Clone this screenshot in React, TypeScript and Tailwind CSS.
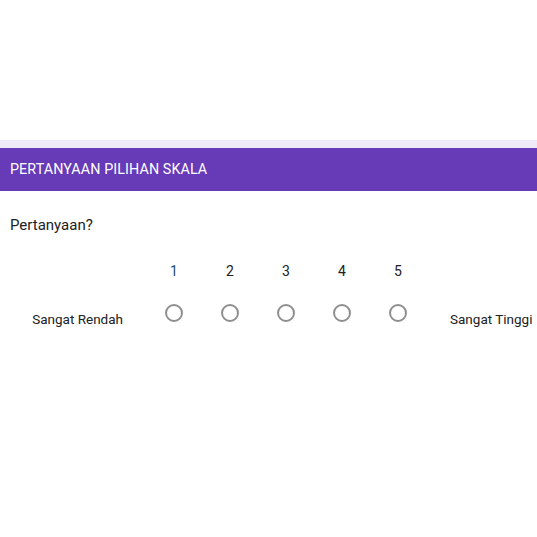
import React from 'react';

const scale = [1, 2, 3, 4, 5];

const App: React.FC = () => {
  return (
    <div className="w-[537px] h-[537px] bg-white overflow-hidden font-['Roboto',sans-serif]">
      <div className="h-[140px]" />
      <div className="h-[8px] bg-[#efe9f8]" />
      <div className="h-[43px] bg-[#673ab7] flex items-center px-[10px]">
        <span className="text-white text-[14.3px] tracking-[0.1px]">PERTANYAAN PILIHAN SKALA</span>
      </div>
      <div className="pt-[24px] px-[10px]">
        <p className="text-[15px] text-[#202124] leading-[20px]">Pertanyaan?</p>
      </div>
      <div className="flex mt-[26px]">
        <div className="w-[146px] flex justify-end items-start pr-[23px] pt-[48px]">
          <span className="text-[13.5px] leading-[20px] text-[#202124]">Sangat Rendah</span>
        </div>
        {scale.map((n) => (
          <div key={n} className="w-[56px] flex flex-col items-center">
            <span className={`text-[14px] leading-[20px] ${n === 1 ? 'text-[#1a4e7a]' : 'text-[#202124]'}`}>{n}</span>
            <div className="mt-[23px] w-[18px] h-[18px] rounded-full border-2 border-[#8f8f8f]" />
          </div>
        ))}
        <div className="flex items-start pl-[24px] pt-[48px]">
          <span className="text-[13.5px] leading-[20px] text-[#202124]">Sangat Tinggi</span>
        </div>
      </div>
    </div>
  );
};

export default App;
